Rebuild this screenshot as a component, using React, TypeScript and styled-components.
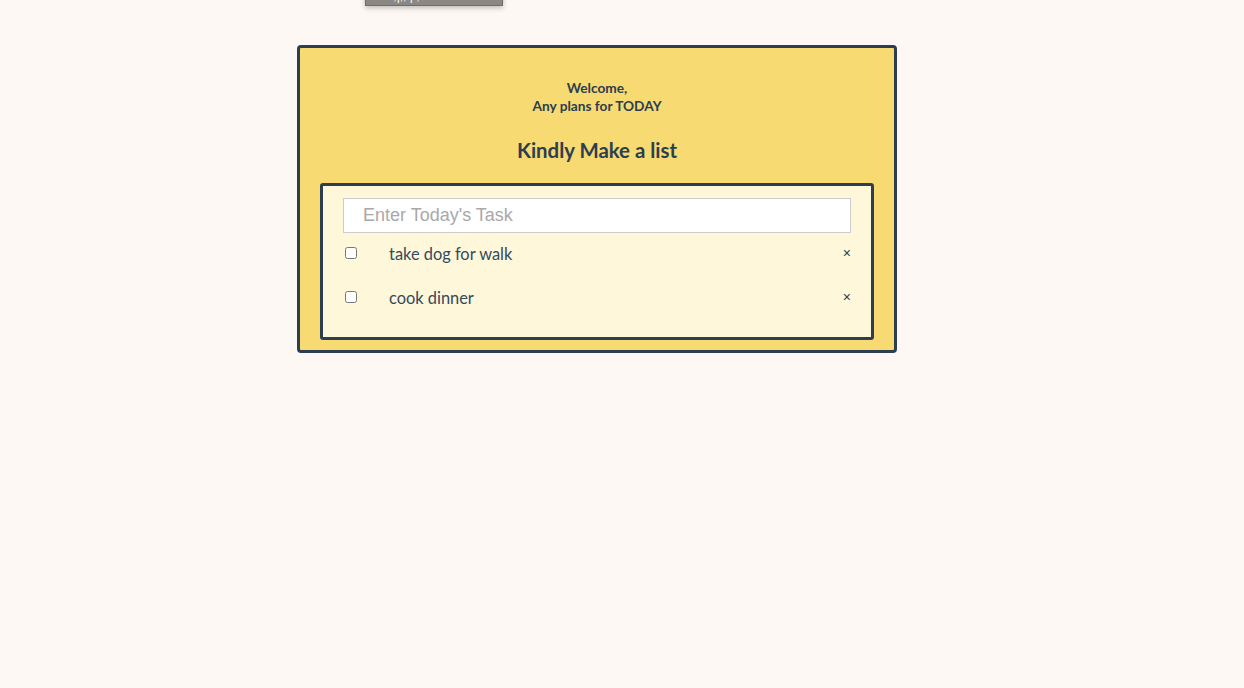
import styled, { createGlobalStyle } from 'styled-components';

const GlobalStyle = createGlobalStyle`
  body {
    margin: 0;
    background-color: #fdf8f4;
    font-family: 'Lato', 'Noto Sans', sans-serif;
    color: #2c3e50;
  }
`;

const Page = styled.div`
  position: relative;
  min-height: 688px;
  padding-top: 45px;
  box-sizing: border-box;
`;

// greyed-out popup peeking in from above the viewport
const Overlay = styled.div`
  position: absolute;
  top: -14px;
  left: 365px;
  width: 138px;
  height: 20px;
  box-sizing: border-box;
  background-color: #8a8784;
  border: 1px solid #6f6c69;
  box-shadow: 0 2px 5px rgba(0, 0, 0, 0.25);
  color: #ffffff;
  font-size: 12px;
  line-height: 18px;
  padding-left: 20px;
  font-family: 'Liberation Sans', sans-serif;
`;

const Card = styled.div`
  width: 600px;
  margin-left: 297px;
  box-sizing: border-box;
  background-color: #f7da72;
  border: 3px solid #2c3e50;
  border-radius: 4px;
  padding: 31px 20px 10px;
`;

const Greeting = styled.p`
  margin: 0;
  text-align: center;
  font-weight: 700;
  font-size: 13.7px;
  line-height: 18px;
`;

const Title = styled.h2`
  margin: 23px 0 21px;
  text-align: center;
  font-weight: 700;
  font-size: 20.4px;
  line-height: 24px;
`;

const ListBox = styled.div`
  background-color: #fef7d9;
  border: 3px solid #2c3e50;
  border-radius: 3px;
  padding: 12px 20px 16px;
`;

const TaskInput = styled.input`
  display: block;
  width: 100%;
  height: 35px;
  box-sizing: border-box;
  border: 1px solid #cccccc;
  background: #ffffff;
  padding: 0 19px;
  font-family: 'Liberation Sans', sans-serif;
  font-size: 18px;
  color: #2c3e50;
  outline: none;

  &::placeholder {
    color: #a9a9a9;
  }
`;

const List = styled.ul`
  list-style: none;
  margin: 0;
  padding: 0;
`;

const Item = styled.li`
  display: flex;
  align-items: center;
  height: 44px;
  box-sizing: border-box;
  padding-bottom: 4px;
  font-size: 16.4px;
`;

const Check = styled.input`
  width: 12px;
  height: 12px;
  margin: 0 32px 0 2px;
`;

const Label = styled.span`
  flex: 1;
  color: #34495e;
`;

const Remove = styled.button`
  border: none;
  background: none;
  padding: 0;
  font-size: 14px;
  color: #2c3e50;
  cursor: pointer;
  font-family: 'Liberation Sans', sans-serif;
`;

const tasks = ['take dog for walk', 'cook dinner'];

export default function App() {
  return (
    <Page>
      <GlobalStyle />
      <Overlay>· ,|,, | ,</Overlay>
      <Card>
        <Greeting>
          Welcome,
          <br />
          Any plans for TODAY
        </Greeting>
        <Title>Kindly Make a list</Title>
        <ListBox>
          <TaskInput placeholder="Enter Today's Task" />
          <List>
            {tasks.map((task) => (
              <Item key={task}>
                <Check type="checkbox" />
                <Label>{task}</Label>
                <Remove>×</Remove>
              </Item>
            ))}
          </List>
        </ListBox>
      </Card>
    </Page>
  );
}
